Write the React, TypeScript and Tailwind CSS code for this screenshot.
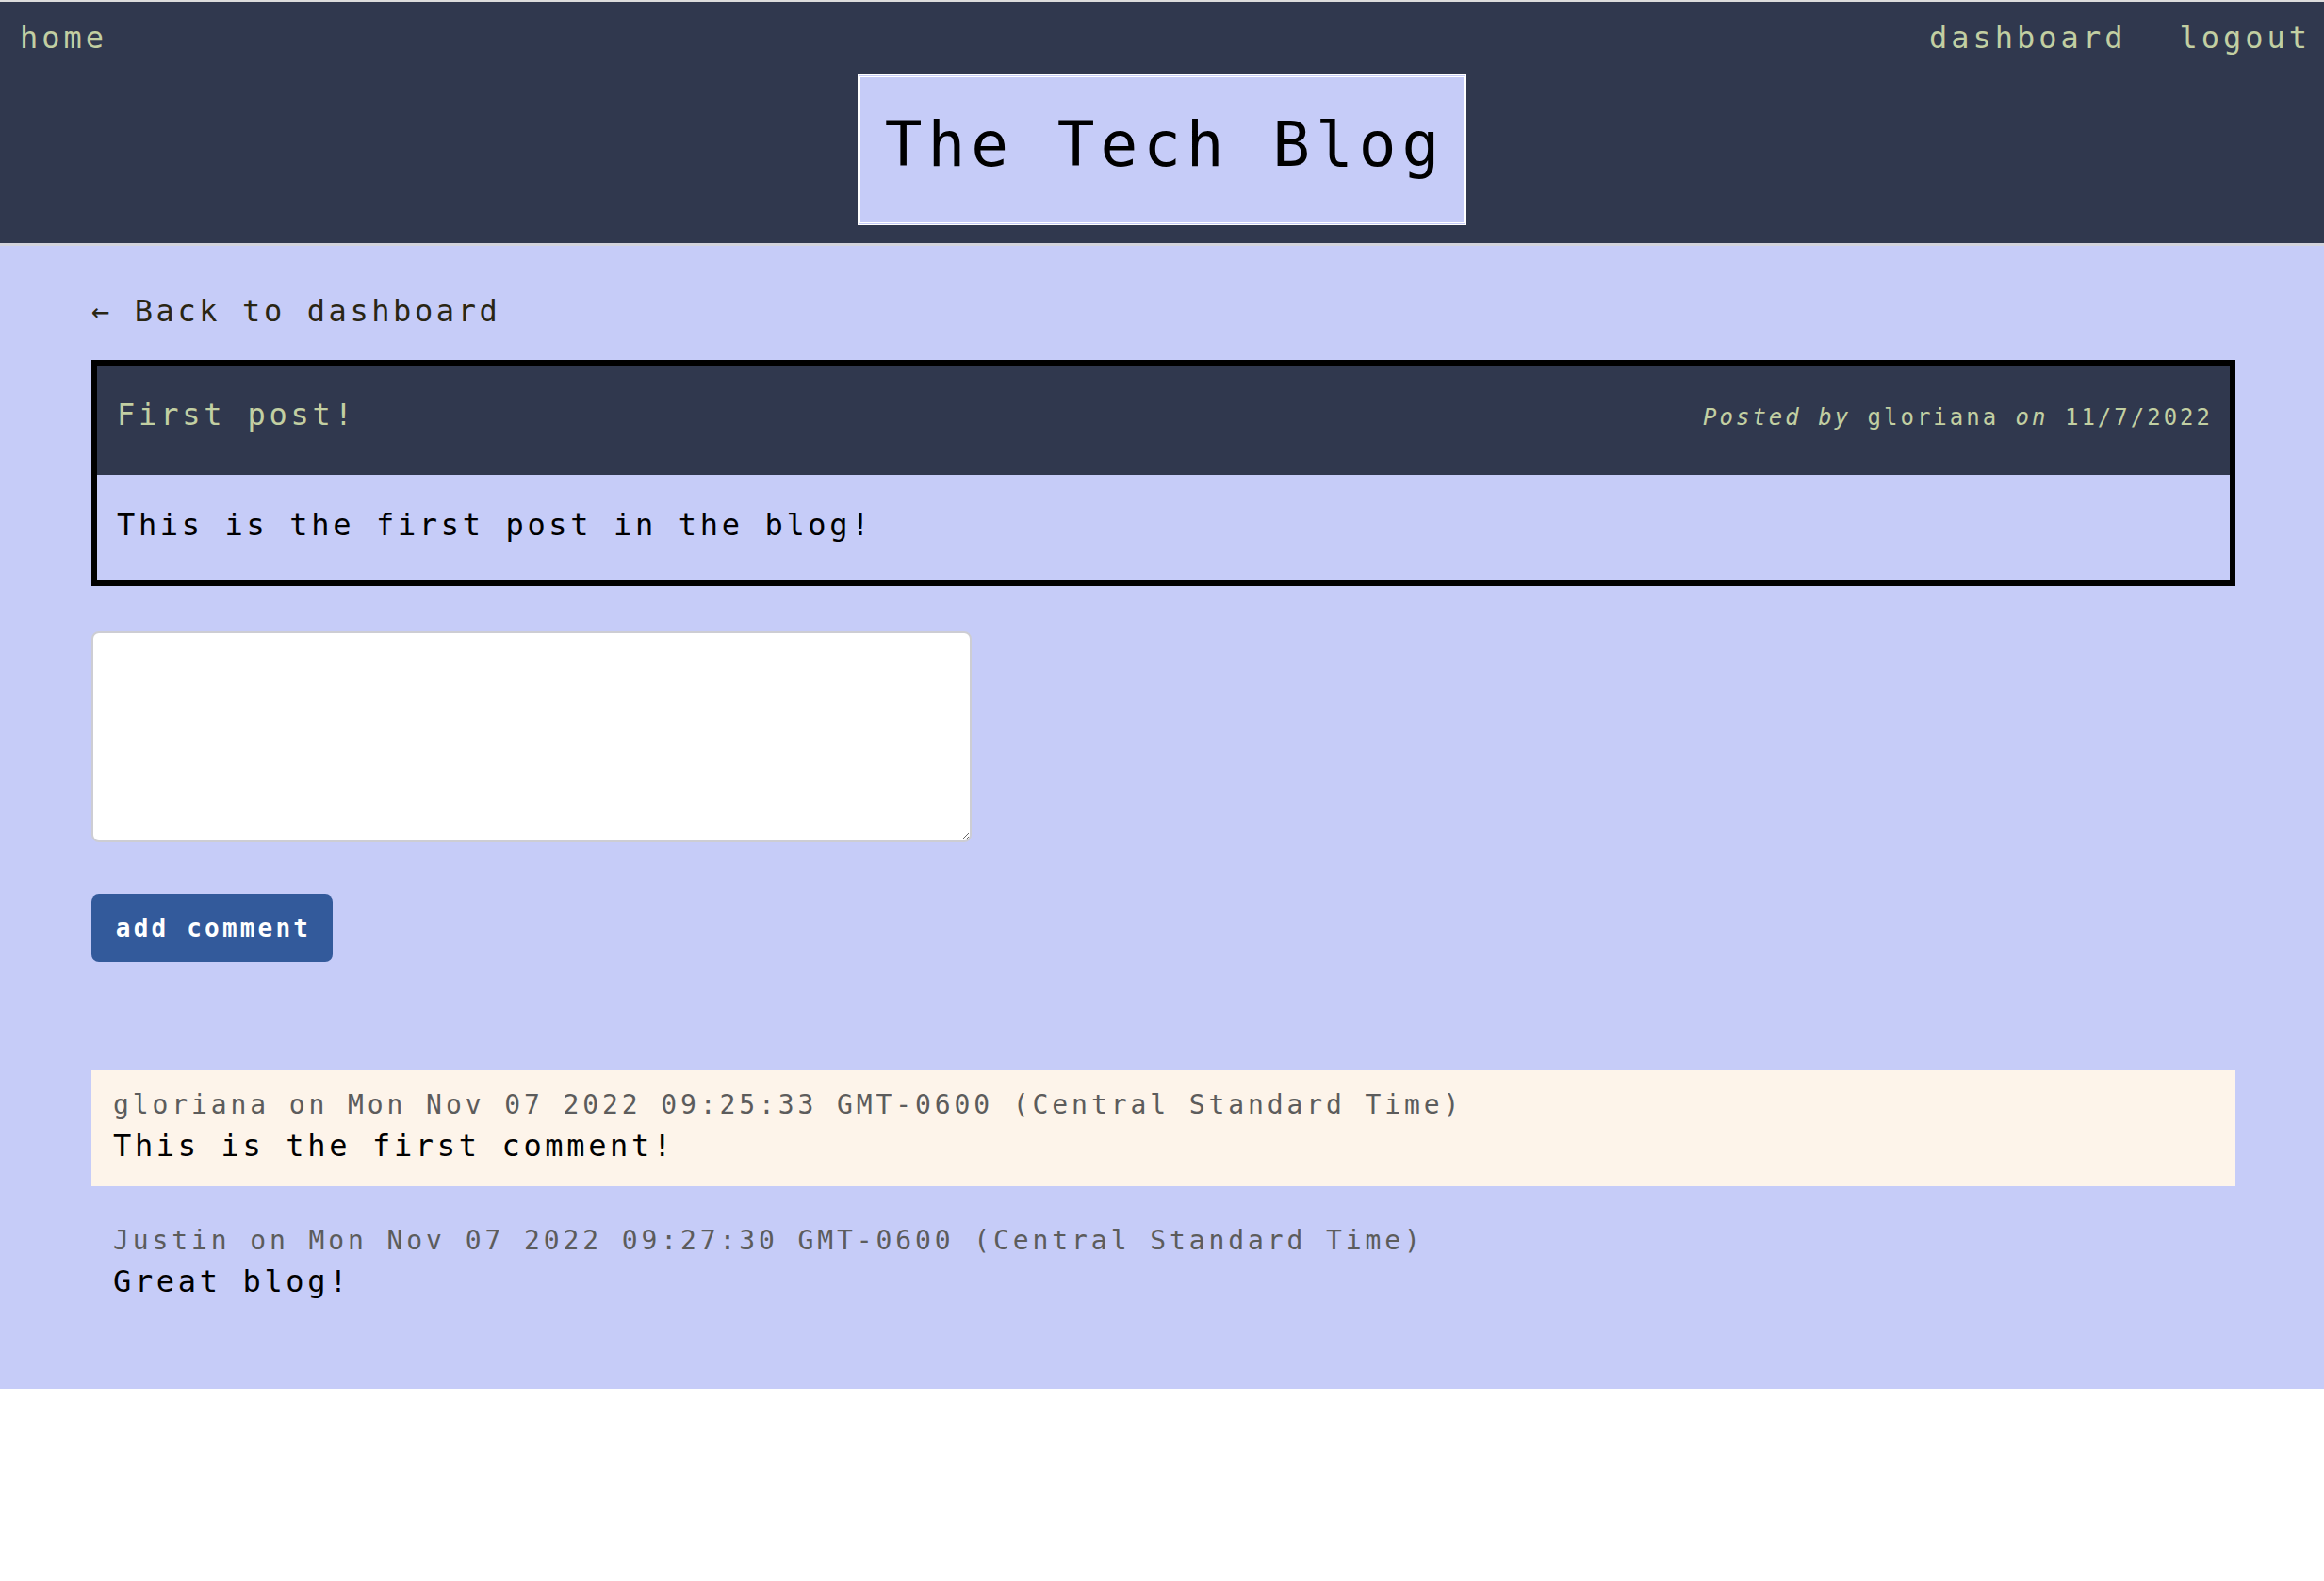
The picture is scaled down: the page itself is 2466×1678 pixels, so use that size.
import React from 'react';

const mono = "font-['DejaVu_Sans_Mono','Liberation_Mono',monospace]";

const comments = [
    {
        user: 'gloriana',
        date: 'Mon Nov 07 2022 09:25:33 GMT-0600 (Central Standard Time)',
        text: 'This is the first comment!',
        highlight: true,
    },
    {
        user: 'Justin',
        date: 'Mon Nov 07 2022 09:27:30 GMT-0600 (Central Standard Time)',
        text: 'Great blog!',
        highlight: false,
    },
];

export const App = () => {
    return (
        <div className={`min-h-screen bg-white ${mono}`}>
            <header className="bg-[#30384e] border-t-2 border-t-[#dcdcdc] border-b-[3px] border-b-[#d2d3dc] pt-[19px] pb-[19px]">
                <nav className="flex justify-between pl-[21px] pr-[14px] text-[32px] leading-[38px] tracking-[4px] text-[#c2cfa2]">
                    <a href="/">home</a>
                    <div className="flex gap-[56px]">
                        <a href="/dashboard">dashboard</a>
                        <a href="/logout">logout</a>
                    </div>
                </nav>
                <div className="flex justify-center mt-[20px]">
                    <h1 className="bg-[#c6ccf8] border-[3px] border-double border-white pl-[26px] pr-[20px] pt-[32px] pb-[42px] text-[66px] leading-[80px] tracking-[6px] text-black">
                        The Tech Blog
                    </h1>
                </div>
            </header>

            <main className="bg-[#c6ccf8] pl-[97px] pr-[94px] pt-[49px] pb-[71px]">
                <a href="/dashboard" className="block text-[32px] leading-[40px] tracking-[3.6px] text-[#2a2614]">
                    ← Back to dashboard
                </a>

                <section className="mt-[32px] border-[6px] border-black">
                    <div className="flex justify-between items-baseline bg-[#30384e] pl-[21px] pr-[18px] pt-[32px] pb-[44px] text-[#c2cfa2]">
                        <h2 className="text-[32px] leading-[40px] tracking-[3.8px]">First post!</h2>
                        <p className="text-[24px] leading-[30px] tracking-[3px]">
                            <em>Posted by</em> gloriana <em>on</em> 11/7/2022
                        </p>
                    </div>
                    <div className="pl-[21px] pt-[33px] pb-[39px] text-[32px] leading-[40px] tracking-[3.65px] text-black">
                        This is the first post in the blog!
                    </div>
                </section>

                <form className="mt-[48px]">
                    <textarea className="block w-[934px] h-[224px] bg-white border-2 border-[#cdcdd3] rounded-[8px] p-3 text-[28px] outline-none" />
                    <button
                        type="button"
                        className="mt-[55px] w-[256px] h-[72px] rounded-[8px] bg-[#335a9b] text-white font-bold text-[26px] tracking-[3.2px] pl-[3px]"
                    >
                        add comment
                    </button>
                </form>

                <div className="mt-[115px] flex flex-col gap-[21px]">
                    {comments.map((c) => (
                        <div
                            key={c.date}
                            className={`px-[23px] pt-[17px] pb-[20px] ${c.highlight ? 'bg-[#fdf4ea]' : ''}`}
                        >
                            <p className="text-[28px] leading-[40px] tracking-[3.9px] text-[#5c5c5c]">
                                {c.user} on {c.date}
                            </p>
                            <p className="text-[32px] leading-[46px] tracking-[3.65px] text-black">{c.text}</p>
                        </div>
                    ))}
                </div>
            </main>
        </div>
    );
};

export default App;
